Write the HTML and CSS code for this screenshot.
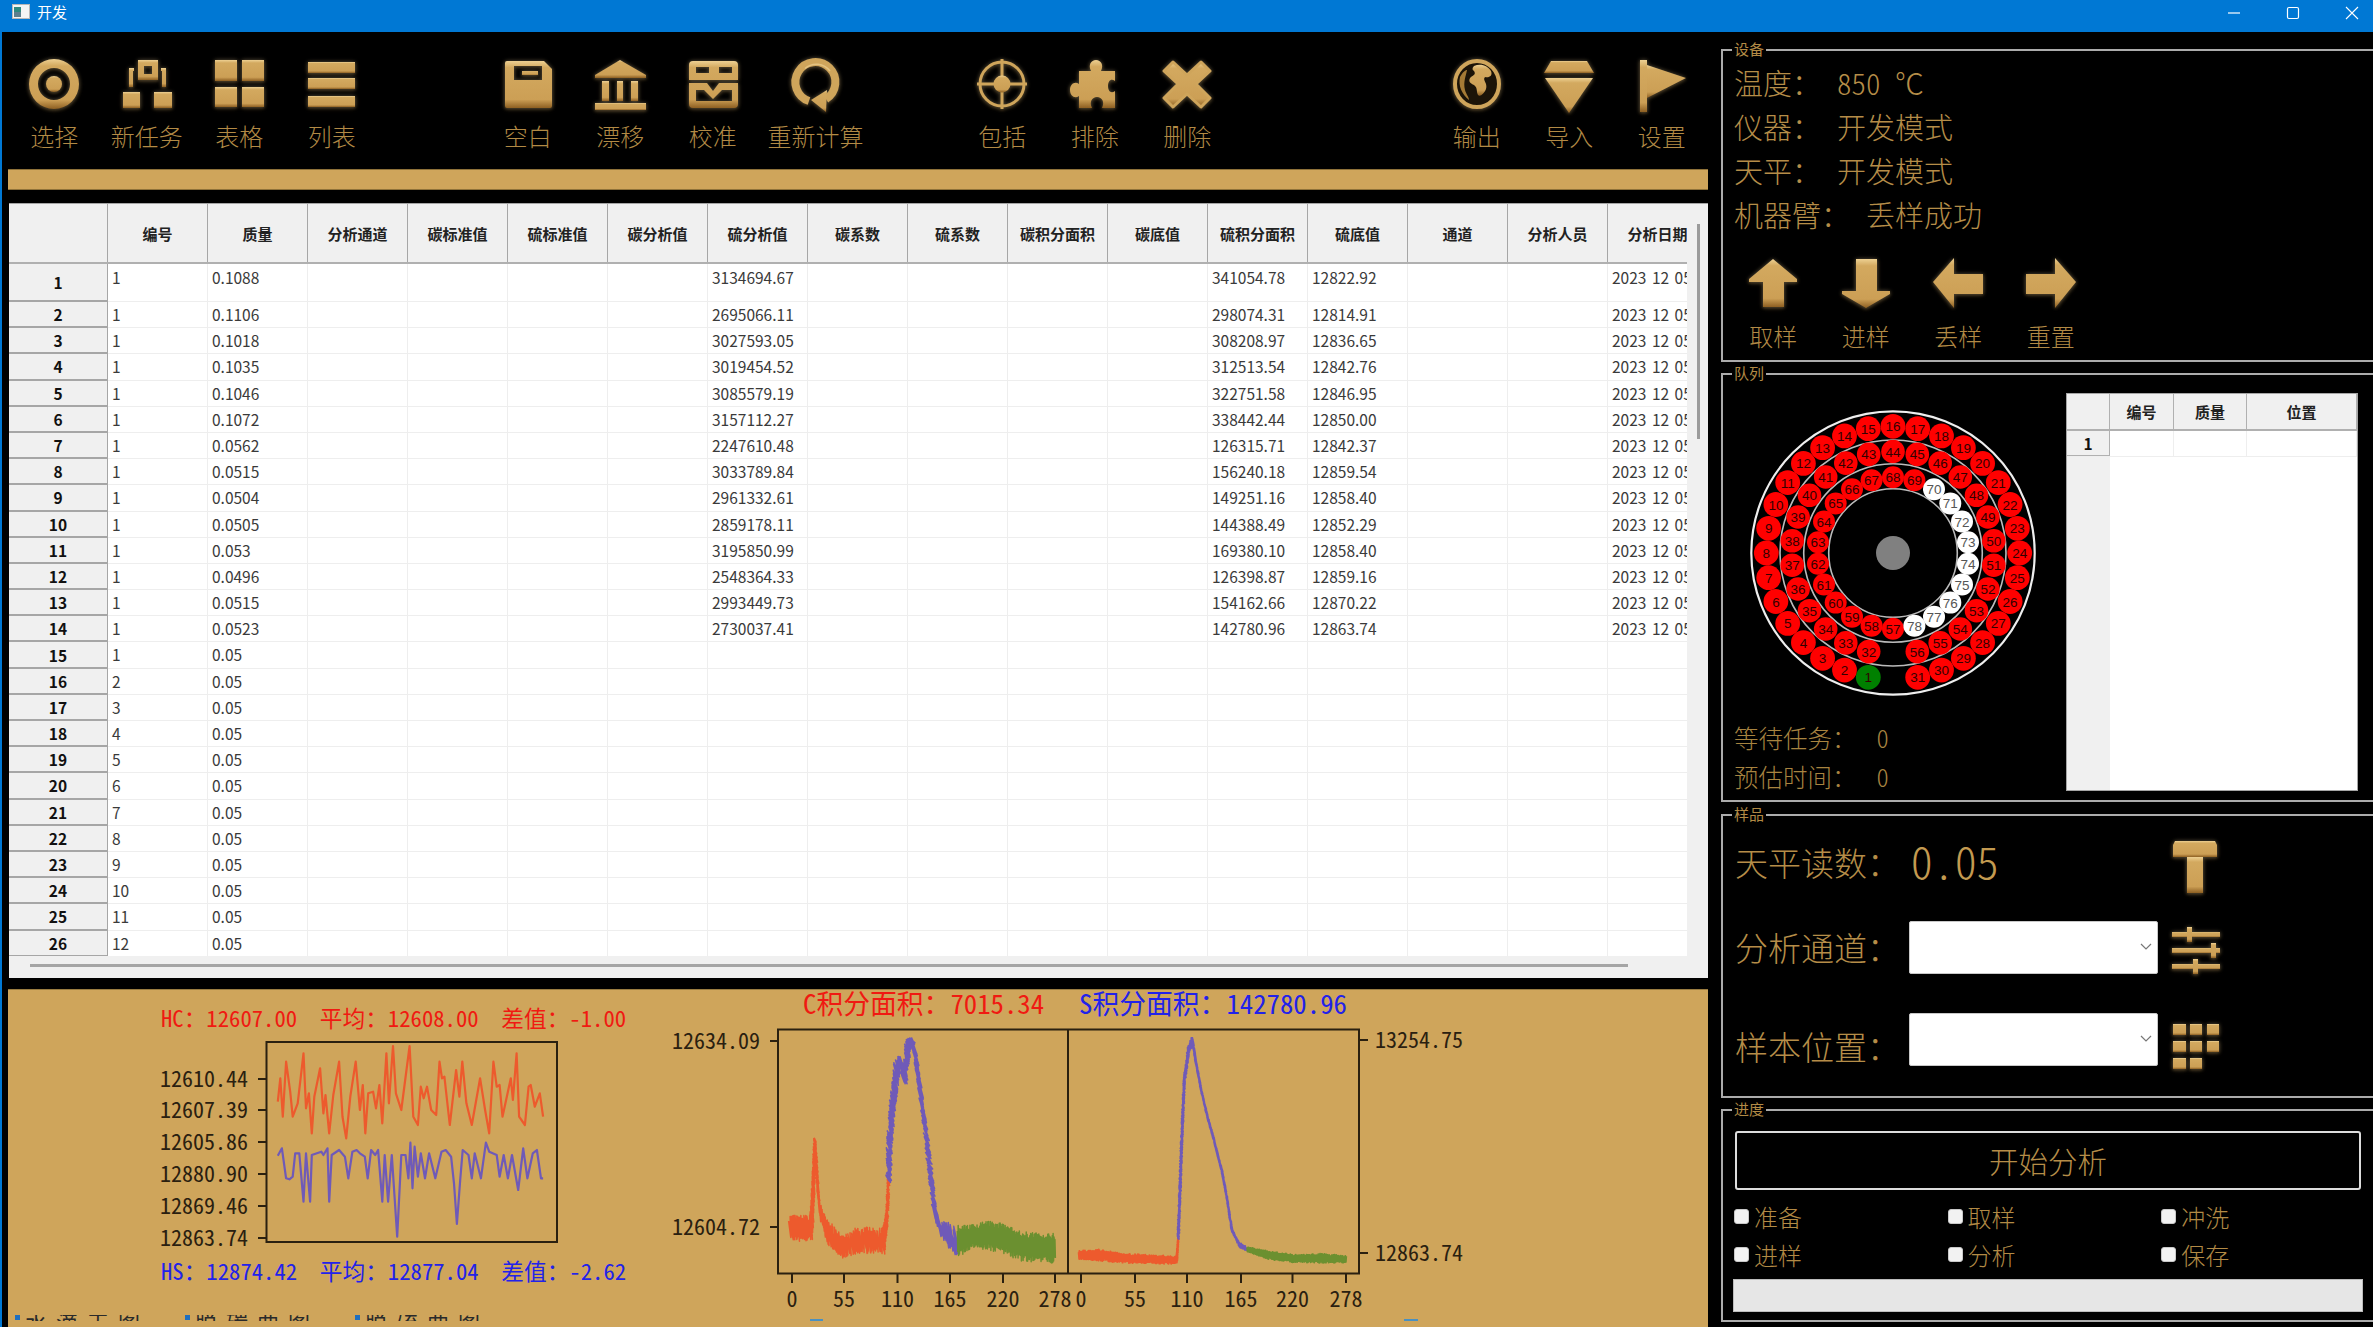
FILE: index.html
```html
<!DOCTYPE html>
<html lang="zh-CN">
<head>
<meta charset="utf-8">
<title>开发</title>
<link rel="stylesheet" href="styles.css">
</head>
<body>
<svg class="defs" width="0" height="0" aria-hidden="true">
  <defs>
    <linearGradient id="gold" x1="0" y1="0" x2="0" y2="1">
      <stop offset="0" stop-color="#edd092"/>
      <stop offset=".14" stop-color="#d3a95f"/>
      <stop offset=".82" stop-color="#cc9f55"/>
      <stop offset="1" stop-color="#8d5f22"/>
    </linearGradient>
  </defs>
</svg>

<header class="titlebar">
  <svg class="app-icon" width="18" height="15" viewBox="0 0 18 15"><rect x=".5" y=".5" width="17" height="14" fill="#f4f4f4" stroke="#b8b8b8"/><rect x="2" y="3" width="7" height="10" fill="#2f8a80"/><rect x="2" y="8" width="7" height="5" fill="#5d7f8e"/></svg>
  <span class="title-text">开发</span>
  <div class="window-controls">
    <span class="win-btn"><svg width="14" height="14" viewBox="0 0 14 14"><path d="M1 7h12" stroke="#fff" stroke-width="1.2"/></svg></span>
    <span class="win-btn"><svg width="14" height="14" viewBox="0 0 14 14"><rect x="1.5" y="1.5" width="11" height="11" rx="1.5" fill="none" stroke="#fff" stroke-width="1.2"/></svg></span>
    <span class="win-btn"><svg width="14" height="14" viewBox="0 0 14 14"><path d="M1 1l12 12M13 1L1 13" stroke="#fff" stroke-width="1.1"/></svg></span>
  </div>
</header>

<div class="main">
  <div class="left-col">
    <nav class="toolbar">
      <div class="tool-group">
        <div class="tool"><svg class="icon" viewBox="0 0 60 60" fill="url(#gold)"><path fill-rule="evenodd" d="M30 6a25 25 0 1 0 0 50a25 25 0 1 0 0-50zM30 15a16 16 0 1 1 0 32a16 16 0 1 1 0-32z"/><circle cx="30" cy="31" r="8"/></svg><span class="tool-label">选择</span></div>
        <div class="tool"><svg class="icon" viewBox="0 0 60 60" fill="url(#gold)"><path fill-rule="evenodd" d="M21 7h20v20H21zM27 13v8h8v-8z"/><path d="M12 15h5v3h-1v16h-4z"/><path d="M44 15h5v19h-4V18h-1z"/><rect x="6" y="39" width="17" height="16"/><rect x="37" y="39" width="18" height="16"/></svg><span class="tool-label">新任务</span></div>
        <div class="tool"><svg class="icon" viewBox="0 0 60 60" fill="url(#gold)"><rect x="6" y="7" width="22" height="21"/><rect x="33" y="7" width="22" height="21"/><rect x="6" y="34" width="22" height="20"/><rect x="33" y="34" width="22" height="20"/></svg><span class="tool-label">表格</span></div>
        <div class="tool"><svg class="icon" viewBox="0 0 60 60" fill="url(#gold)"><rect x="6" y="9" width="47" height="11"/><rect x="6" y="25" width="47" height="11"/><rect x="6" y="43" width="47" height="11"/></svg><span class="tool-label">列表</span></div>
      </div>
      <div class="tool-group group-2">
        <div class="tool"><svg class="icon" viewBox="0 0 60 60" fill="url(#gold)"><path fill-rule="evenodd" d="M9 8h37l8 8v37a2 2 0 0 1-2 2H9a2 2 0 0 1-2-2V10a2 2 0 0 1 2-2zM16 13v14h28V13z"/><rect x="24" y="18" width="16" height="4"/></svg><span class="tool-label">空白</span></div>
        <div class="tool"><svg class="icon" viewBox="0 0 60 60" fill="url(#gold)"><path d="M30 7l26 15v3H5v-3z"/><rect x="12" y="28" width="7" height="20"/><rect x="27" y="28" width="6" height="20"/><rect x="41" y="28" width="7" height="20"/><rect x="5" y="50" width="51" height="7"/></svg><span class="tool-label">漂移</span></div>
        <div class="tool"><svg class="icon" viewBox="0 0 60 60" fill="url(#gold)"><path fill-rule="evenodd" d="M10 8h41a4 4 0 0 1 4 4v39a4 4 0 0 1-4 4H10a4 4 0 0 1-4-4V12a4 4 0 0 1 4-4zM13 14v6h13v-6zM36 14v6h13v-6zM6 27v3h18l6 8 6-8h19v-3zM13 37v11h36V37H39l-9 9-9-9z"/></svg><span class="tool-label">校准</span></div>
        <div class="tool tool-wide"><svg class="icon" viewBox="0 0 60 60"><path d="M23 48A20 20 0 1 1 40 46" fill="none" stroke="#cfa55b" stroke-width="8"/><path d="M19 15.500A17 17 0 0 1 44 18" fill="none" stroke="#e4c382" stroke-width="1.500"/><path d="M41 37l-1 22-15-12z" fill="url(#gold)"/></svg><span class="tool-label">重新计算</span></div>
      </div>
      <div class="tool-group group-3">
        <div class="tool"><svg class="icon" viewBox="0 0 60 60"><circle cx="30" cy="31" r="22" fill="none" stroke="#cfa55b" stroke-width="3"/><path d="M30 6v50M5 31h50" stroke="#cfa55b" stroke-width="3"/><circle cx="30" cy="31" r="8.500" fill="url(#gold)"/></svg><span class="tool-label">包括</span></div>
        <div class="tool"><svg class="icon" viewBox="0 0 60 60" fill="url(#gold)"><path d="M21 18H26C23 12 26 7 31 7S39 12 36 18H50V28C46 25 43 28 43 33S46 41 50 38V55H37C40 49 37 44 32 44S24 49 27 55H14V43C10 46 5 43 5 37S10 28 14 31V18Z"/></svg><span class="tool-label">排除</span></div>
        <div class="tool"><svg class="icon" viewBox="0 0 60 60" fill="url(#gold)"><path stroke="#cfa55b" stroke-width="3" stroke-linejoin="round" d="M16 9l14 13L44 9l9 9-14 13 14 14-9 9-14-13-14 13-9-9 14-14L7 18z"/></svg><span class="tool-label">删除</span></div>
      </div>
      <div class="tool-group group-4">
        <div class="tool"><svg class="icon" viewBox="0 0 60 60"><ellipse cx="30" cy="31" rx="22" ry="23" fill="#1c1408" stroke="#cfa55b" stroke-width="4"/><path fill="url(#gold)" d="M27 13c7-3 14 0 17 5 2 5-2 7-6 6-3 3 3 6 1 12-2 5-6 8-8 6-2-4 0-7-4-10-5-2-6-5-3-8 3-2 5-3 3-6-2-1-2-3 0-5z"/><path fill="#a57a35" d="M13 24c3-5 5-7 7-7-1 6-4 12-2 20 1 4 4 7 4 10-7-6-11-14-9-23z"/></svg><span class="tool-label">输出</span></div>
        <div class="tool"><svg class="icon" viewBox="0 0 60 60" fill="url(#gold)"><path d="M12 8h36l7 12H5z"/><path d="M6 25h48L30 60z"/></svg><span class="tool-label">导入</span></div>
        <div class="tool"><svg class="icon" viewBox="0 0 60 60" fill="url(#gold)"><rect x="8" y="7" width="7" height="52"/><path d="M15 12l39 13-39 20z"/></svg><span class="tool-label">设置</span></div>
      </div>
    </nav>
    <div class="gold-bar"></div>

    <section class="table-frame">
      <div class="table-view">
        <div class="t-row t-head">
          <div class="t-corner"></div>
          <div class="t-hcell">编号</div><div class="t-hcell">质量</div><div class="t-hcell">分析通道</div><div class="t-hcell">碳标准值</div><div class="t-hcell">硫标准值</div><div class="t-hcell">碳分析值</div><div class="t-hcell">硫分析值</div><div class="t-hcell">碳系数</div><div class="t-hcell">硫系数</div><div class="t-hcell">碳积分面积</div><div class="t-hcell">碳底值</div><div class="t-hcell">硫积分面积</div><div class="t-hcell">硫底值</div><div class="t-hcell">通道</div><div class="t-hcell">分析人员</div><div class="t-hcell">分析日期</div>
        </div>
        <div id="table-body"></div>
      </div>
      <div class="v-scroll"><div class="v-thumb"></div></div>
      <div class="h-scroll"><div class="h-thumb"></div></div>
    </section>

    <section class="chart-panel">
      <svg id="charts" class="charts" viewBox="8 989 1700 338" width="1700" height="338"></svg>
    </section>
  </div>

  <aside class="right-col">
    <section class="box box-device">
      <span class="legend">设备</span>
      <div class="dev-row"><span>温度：</span><span>850 ℃</span></div>
      <div class="dev-row"><span>仪器：</span><span>开发模式</span></div>
      <div class="dev-row"><span>天平：</span><span>开发模式</span></div>
      <div class="dev-row"><span>机器臂：</span><span>丢样成功</span></div>
      <div class="arrow-row">
        <div class="tool"><svg class="icon" viewBox="0 0 60 60" fill="url(#gold)"><path d="M30 7l24 20v3H41v25H20V30H6v-3z"/></svg><span class="tool-label">取样</span></div>
        <div class="tool"><svg class="icon" viewBox="0 0 60 60" fill="url(#gold)"><path d="M20 7h21v32h13v3L30 56 6 42v-3h14z"/></svg><span class="tool-label">进样</span></div>
        <div class="tool"><svg class="icon" viewBox="0 0 60 60" fill="url(#gold)"><path d="M5 30L26 6v16h29v20H26v14z"/></svg><span class="tool-label">丢样</span></div>
        <div class="tool"><svg class="icon" viewBox="0 0 60 60" fill="url(#gold)"><path d="M55 30L34 6v16H5v20h29v14z"/></svg><span class="tool-label">重置</span></div>
      </div>
    </section>

    <section class="box box-queue">
      <span class="legend">队列</span>
      <div class="queue-left">
        <svg id="wheel" class="wheel" viewBox="0 0 300 300" width="300" height="300"></svg>
        <div class="queue-status"><span>等待任务：</span><span>0</span></div>
        <div class="queue-status"><span>预估时间：</span><span>0</span></div>
      </div>
      <div class="queue-table">
        <div class="q-row q-head"><div class="q-corner"></div><div class="q-hcell q-c1">编号</div><div class="q-hcell q-c2">质量</div><div class="q-hcell q-c3">位置</div></div>
        <div class="q-row q-body"><div class="q-rowhead">1</div><div class="q-cell q-c1"></div><div class="q-cell q-c2"></div><div class="q-cell q-c3"></div></div>
      </div>
    </section>

    <section class="box box-sample">
      <span class="legend">样品</span>
      <div class="sample-row">
        <span class="sample-label label-high">天平读数：</span>
        <span class="balance">0.05</span>
        <svg class="icon" viewBox="0 0 60 60" fill="url(#gold)"><path d="M10 7h40l2 4v12H8V11z"/><rect x="22" y="23" width="16" height="36"/></svg>
      </div>
      <div class="sample-row row-channel">
        <span class="sample-label">分析通道：</span>
        <div class="combo"><svg width="12" height="8" viewBox="0 0 12 8"><path d="M1 1l5 5 5-5" fill="none" stroke="#777" stroke-width="1.200"/></svg></div>
        <svg class="icon" viewBox="0 0 60 60" fill="url(#gold)"><rect x="7" y="14" width="48" height="5"/><rect x="22" y="9" width="5" height="15"/><rect x="7" y="30" width="48" height="5"/><rect x="46" y="25" width="5" height="15"/><rect x="7" y="46" width="48" height="5"/><rect x="28" y="41" width="5" height="15"/></svg>
      </div>
      <div class="sample-row row-position">
        <span class="sample-label label-low">样本位置：</span>
        <div class="combo"><svg width="12" height="8" viewBox="0 0 12 8"><path d="M1 1l5 5 5-5" fill="none" stroke="#777" stroke-width="1.200"/></svg></div>
        <svg class="icon" viewBox="0 0 60 60" fill="url(#gold)"><rect x="8" y="14" width="13" height="11"/><rect x="25" y="14" width="12" height="11"/><rect x="42" y="14" width="12" height="11"/><rect x="8" y="31" width="13" height="11"/><rect x="25" y="31" width="12" height="11"/><rect x="42" y="31" width="12" height="11"/><rect x="8" y="48" width="13" height="11"/><rect x="25" y="48" width="12" height="11"/></svg>
      </div>
    </section>

    <section class="box box-progress">
      <span class="legend">进度</span>
      <button class="start-btn" type="button">开始分析</button>
      <div class="checks">
        <label class="check"><input type="checkbox">准备</label>
        <label class="check"><input type="checkbox">取样</label>
        <label class="check"><input type="checkbox">冲洗</label>
        <label class="check"><input type="checkbox">进样</label>
        <label class="check"><input type="checkbox">分析</label>
        <label class="check"><input type="checkbox">保存</label>
      </div>
      <div class="progress-bar"></div>
    </section>
  </aside>
</div>
<script src="app.js"></script>
</body>
</html>
```
FILE: styles.css
```css
* { box-sizing: border-box; }
html, body { margin: 0; padding: 0; }
body {
  width: 2373px;
  height: 1327px;
  overflow: hidden;
  background: #000;
  font-family: "Noto Sans CJK SC", "Liberation Sans", sans-serif;
  display: flex;
  flex-direction: column;
}
.defs { position: absolute; }

.titlebar {
  height: 32px;
  flex: none;
  background: #0078d4;
  display: flex;
  align-items: center;
  padding-left: 12px;
  color: #fff;
  font-size: 15px;
}
.app-icon { margin-top: -9px; }
.title-text { margin-left: 7px; margin-top: -9px; line-height: 1; }
.window-controls { margin-left: auto; margin-right: -8px; display: flex; margin-top: -6px; }
.win-btn { width: 59px; display: flex; justify-content: center; }

.main { flex: 1; display: flex; border-left: 2px solid #0078d4; min-height: 0; }
.left-col { width: 1706px; padding-left: 6px; display: flex; flex-direction: column; }
.right-col { flex: 1; margin-left: 13px; padding-top: 17px; display: flex; flex-direction: column; overflow: hidden; }

/* old-style half-width text */
.tool-label, .dev-row, .queue-status, .sample-label, .balance, .start-btn, .check, .chart-text {
  font-family: "Noto Sans CJK SC", sans-serif;
  font-feature-settings: "hwid";
  font-weight: 300;
}

.toolbar { height: 137px; padding-top: 21px; display: flex; flex: none; }
.tool-group { display: flex; }
.group-2 { margin-left: 103.5px; }
.group-3 { margin-left: 84px; }
.group-4 { margin-left: 197px; }
.tool { width: 92.500px; display: flex; flex-direction: column; align-items: center; }
.tool-wide { width: 113px; }
.icon {
  width: 60px;
  height: 60px;
  flex: none;
  overflow: visible;
  filter: drop-shadow(0 0 2px rgba(70, 68, 60, .9)) drop-shadow(0 1px 1px rgba(100, 72, 28, .7));
}
.tool-label { margin-top: 8px; line-height: 30px; font-size: 24px; color: #b28a45; white-space: nowrap; }

.gold-bar { height: 21px; flex: none; background: #cfa55b; border: 1px solid #8f7239; border-width: 1px 0; }

.table-frame {
  margin: 13px 0 0 1px;
  height: 774px;
  flex: none;
  background: #f0f0f0;
  display: grid;
  grid-template-columns: 1678px 21px;
  grid-template-rows: 752px 22px;
  border-top: 1px solid #a5a5a5;
}
.table-view { background: #fff; overflow: hidden; }
.t-row { display: flex; }
.t-head { height: 60px; border-bottom: 2px solid #b0b0b0; }
.t-corner { width: 99px; flex: none; background: #f0f0f0; border-right: 1px solid #a6a6a6; }
.t-hcell {
  width: 100px;
  flex: none;
  background: #f0f0f0;
  border-right: 1px solid #a6a6a6;
  display: flex;
  align-items: center;
  justify-content: center;
  font-size: 15px;
  font-weight: 700;
  color: #222;
  white-space: nowrap;
  overflow: hidden;
}
.t-data { height: 26.200px; }
.t-tall { height: 38px; }
.t-rowhead {
  width: 99px;
  flex: none;
  background: #f0f0f0;
  border-right: 1px solid #a6a6a6;
  border-bottom: 2px solid #a6a6a6;
  display: flex;
  align-items: center;
  justify-content: center;
  font-size: 15.500px;
  font-weight: 700;
  color: #111;
}
.t-cell {
  width: 100px;
  flex: none;
  padding-left: 4px;
  border-right: 1px solid #eeeeee;
  border-bottom: 1px solid #eeeeee;
  font-size: 15.500px;
  line-height: 25px;
  color: #3a3a3a;
  white-space: nowrap;
  word-spacing: 2px;
  overflow: hidden;
}
.t-tall .t-cell { line-height: 24px; padding-top: 1px; }
.v-scroll { background: #f0f0f0; grid-row: 1 / span 2; grid-column: 2; padding-top: 20px; padding-left: 10px; }
.v-thumb { width: 3px; height: 215px; background: #9b9b9b; }
.h-scroll { padding: 8px 0 0 21px; background: #f0f0f0; }
.h-thumb { width: 1598px; height: 3px; background: #a5a5a5; }

.chart-panel { margin-top: 12px; flex: 1; background: #cfa55b; border-top: 1px solid #9a7c40; min-height: 0; overflow: hidden; }
.charts { display: block; margin-top: -1px; }
.chart-text { font-size: 22px; font-weight: 400; fill: #2a2010; dominant-baseline: central; }
.chart-head { font-size: 22.700px; white-space: pre; }
.chart-title { font-size: 26.800px; }
.red { fill: #f01a12; }
.blue { fill: #2222ea; }
.clip-text { font-size: 22px; fill: #2a2a2a; letter-spacing: 9px; font-family: "Noto Sans CJK SC", sans-serif; }

.box { position: relative; border: 2px solid #ababab; border-right: 0; flex: none; }
.legend {
  position: absolute;
  left: 9px;
  top: -11px;
  padding: 0 2px;
  background: #000;
  color: #b28a45;
  font-size: 15px;
  line-height: 18px;
}
.box-device { height: 313px; padding: 8.500px 0 0 11px; }
.box-queue { height: 429px; margin-top: 11px; padding: 18px 0 0 11px; display: flex; }
.box-sample { height: 284px; margin-top: 12px; padding-top: 20px; }
.box-progress { height: 213px; margin-top: 11px; padding: 19.500px 0 0 12px; }

.dev-row { height: 44px; line-height: 44px; font-size: 29px; color: #b58d48; display: flex; gap: 16px; white-space: pre; }
.arrow-row { display: flex; margin: 16px 0 0 -7px; }
.arrow-row .tool-label { margin-top: 9.500px; }

.queue-left { width: 332px; flex: none; }
.wheel { display: block; margin: 10px 0 0 9px; }
.queue-status { height: 39px; line-height: 39px; font-size: 24.500px; color: #a88440; display: flex; gap: 20px; }
.wheel + .queue-status { margin-top: 14.500px; }
.queue-table { width: 292px; height: 398px; flex: none; border: 1px solid #a5a5a5; background: linear-gradient(to right, #f0f0f0 43px, #fff 43px); }
.q-row { display: flex; }
.q-head { height: 37px; border-bottom: 2px solid #b0b0b0; background: #f0f0f0; }
.q-corner, .q-rowhead { width: 43px; flex: none; border-right: 1px solid #b0b0b0; }
.q-body { height: 26px; border-bottom: 1px solid #eeeeee; }
.q-rowhead { display: flex; align-items: center; justify-content: center; background: #f0f0f0; font-size: 15.500px; font-weight: 700; color: #111; border-bottom: 1px solid #b0b0b0; }
.q-hcell { display: flex; align-items: center; justify-content: center; font-size: 15px; font-weight: 700; color: #222; border-right: 1px solid #b0b0b0; }
.q-cell { border-right: 1px solid #eeeeee; }
.q-c1 { width: 64px; }
.q-c2 { width: 73px; }
.q-c3 { width: 110px; }

.sample-row { display: flex; align-items: center; height: 53px; padding-left: 12px; }
.row-channel { margin-top: 31.500px; }
.row-position { margin-top: 39px; }
.sample-label { width: 173.700px; flex: none; font-size: 33px; color: #b58d48; white-space: nowrap; }
.label-high { margin-bottom: 2px; }
.label-low { margin-top: 13px; }
.balance { width: 249.300px; flex: none; padding-left: 2px; margin-bottom: 5px; font-size: 44px; color: #c39a50; }
.combo { width: 249.300px; height: 53px; flex: none; background: #fff; border: 1px solid #c8c8c8; border-radius: 2px; display: flex; align-items: center; justify-content: flex-end; padding-right: 5px; }
.sample-row .icon { margin: 2px 0 0 7px; }

.start-btn {
  display: block;
  width: 626px;
  height: 59px;
  background: #000;
  border: 2px solid #dcdcdc;
  border-radius: 3px;
  color: #b58d48;
  font-size: 29.500px;
  padding: 0;
}
.checks { margin: 8px 0 0 -1px; display: grid; grid-template-columns: repeat(3, 213.600px); grid-auto-rows: 38px; }
.check { display: flex; align-items: center; gap: 5px; font-size: 24px; color: #b28a45; }
.check input { appearance: none; margin: 0; width: 15px; height: 15px; border-radius: 3px; background: #f2f2f2; border: 1px solid #c8c8c8; flex: none; }
.progress-bar { margin: 5px 0 0 -2px; width: 630px; height: 33px; background: #e6e6e6; border: 1px solid #bcbcbc; }
```
FILE: app.js
```js
/* ---------- main table ---------- */
var rows = [
  ["1","0.1088","3134694.67","341054.78","12822.92"],
  ["1","0.1106","2695066.11","298074.31","12814.91"],
  ["1","0.1018","3027593.05","308208.97","12836.65"],
  ["1","0.1035","3019454.52","312513.54","12842.76"],
  ["1","0.1046","3085579.19","322751.58","12846.95"],
  ["1","0.1072","3157112.27","338442.44","12850.00"],
  ["1","0.0562","2247610.48","126315.71","12842.37"],
  ["1","0.0515","3033789.84","156240.18","12859.54"],
  ["1","0.0504","2961332.61","149251.16","12858.40"],
  ["1","0.0505","2859178.11","144388.49","12852.29"],
  ["1","0.053","3195850.99","169380.10","12858.40"],
  ["1","0.0496","2548364.33","126398.87","12859.16"],
  ["1","0.0515","2993449.73","154162.66","12870.22"],
  ["1","0.0523","2730037.41","142780.96","12863.74"]
];
for (var n = 1; n <= 12; n++) rows.push([String(n), "0.05", "", "", ""]);

var html = "";
rows.forEach(function (r, i) {
  var cells = new Array(16).fill("");
  cells[0] = r[0]; cells[1] = r[1]; cells[6] = r[2]; cells[11] = r[3]; cells[12] = r[4];
  if (r[2]) cells[15] = "2023 12 05";
  html += '<div class="t-row ' + (i === 0 ? "t-tall" : "t-data") + '"><div class="t-rowhead">' + (i + 1) + "</div>";
  cells.forEach(function (c) { html += '<div class="t-cell">' + c + "</div>"; });
  html += "</div>";
});
document.getElementById("table-body").innerHTML = html;

/* ---------- sample wheel ---------- */
function ring(from, count, steps, r, br, s) {
  var out = "";
  for (var k = 0; k < count; k++) {
    var num = from + k;
    var a = ((k + s) * 2 * Math.PI) / steps;
    var x = 150 - r * Math.sin(a), y = 150 + r * Math.cos(a);
    var fill = num === 1 ? "#008000" : num >= 70 ? "#fff" : "#f00";
    var tc = num >= 70 ? "#555" : "#300";
    out += '<circle cx="' + x.toFixed(1) + '" cy="' + y.toFixed(1) + '" r="' + br + '" fill="' + fill + '"/>' +
      '<text x="' + x.toFixed(1) + '" y="' + (y + 5).toFixed(1) + '" text-anchor="middle" font-family="Liberation Sans" font-size="13.5" fill="' + tc + '">' + num + "</text>";
  }
  return out;
}
document.getElementById("wheel").innerHTML =
  '<g fill="none"><circle cx="150" cy="150" r="141.7" stroke="#eee" stroke-width="2.2"/>' +
  '<circle cx="150" cy="150" r="113" stroke="#bbb" stroke-width="1.6"/>' +
  '<circle cx="150" cy="150" r="89.3" stroke="#bbb" stroke-width="1.6"/>' +
  '<circle cx="150" cy="150" r="64.3" stroke="#bbb" stroke-width="1.6"/></g>' +
  '<circle cx="150" cy="150" r="17" fill="#808080"/>' +
  ring(1, 31, 32, 126.7, 12.4, 1) + ring(32, 25, 26, 101.5, 11.8, 1) + ring(57, 22, 22, 75.8, 11, 0);

/* ---------- charts ---------- */
var seed = 7;
function rnd() { seed = (seed * 16807) % 2147483647; return seed / 2147483647; }
function zx6(x) { return x / 2.412; }
function zx7(x) { return 640 + x / 1.96; }
function zy(y) { return 970 + y / 3; }

function line(flat, color, w) {
  var p = [];
  for (var i = 0; i < flat.length; i += 2) p.push(zx6(flat[i]).toFixed(1) + "," + zy(flat[i + 1]).toFixed(1));
  return '<polyline fill="none" stroke="' + color + '" stroke-width="' + w + '" stroke-linejoin="round" points="' + p.join(" ") + '"/>';
}
/* noisy signal: each point [x, y, vertical half-width], jx = sideways spread on steep parts */
function band(pts, color, jx, sw) {
  var p = [], up = true;
  for (var i = 0; i < pts.length - 1; i++) {
    var a = pts[i], b = pts[i + 1];
    var x0 = zx7(a[0]), x1 = zx7(b[0]);
    var y0 = zy(a[1]), y1 = zy(b[1]);
    var len = Math.hypot(x1 - x0, y1 - y0);
    var steps = Math.max(2, Math.round(len / 0.45));
    for (var s = 0; s < steps; s++) {
      var t = s / steps;
      var h = (a[2] + (b[2] - a[2]) * t) / 3;
      var sign = up ? -1 : 1;
      var py = y0 + (y1 - y0) * t + h * (0.55 + 0.45 * rnd()) * sign;
      var px = x0 + (x1 - x0) * t + jx * rnd() * sign;
      p.push(px.toFixed(2) + "," + py.toFixed(1));
      up = !up;
    }
  }
  return '<polyline fill="none" stroke="' + color + '" stroke-width="' + sw + '" stroke-linejoin="round" points="' + p.join(" ") + '"/>';
}
function label(x, y, s, anchor, cls) {
  return '<text class="chart-text ' + (cls || "") + '" x="' + x + '" y="' + (y - 2) + '"' + (anchor ? ' text-anchor="' + anchor + '"' : "") + ">" + s + "</text>";
}
function tick(x1, y1, x2, y2) {
  return '<line x1="' + x1 + '" y1="' + y1 + '" x2="' + x2 + '" y2="' + y2 + '" stroke="#2a2010" stroke-width="2"/>';
}

var ORANGE = "#ed5a2d", PURPLE = "#6f5ab8", GREEN = "#6b9030";
var svg = "";

/* small drift chart */
svg += label(161, 1019, "HC：12607.00  平均：12608.00  差值：-1.00", "", "chart-head red");
svg += '<rect x="266.500" y="1042" width="290.500" height="200" fill="none" stroke="#2a2010" stroke-width="2"/>';
[[1079,"12610.44"],[1110,"12607.39"],[1142,"12605.86"],[1174,"12880.90"],[1206,"12869.46"],[1238,"12863.74"]].forEach(function (t) {
  svg += tick(258, t[0], 266, t[0]) + label(248, t[0], t[1], "end");
});
svg += line([670,395,676,325,682,440,690,275,700,365,706,440,718,400,732,250,738,415,745,370,752,490,758,380,772,295,780,430,785,375,794,490,804,375,818,275,826,440,835,505,845,380,858,275,868,420,875,345,881,490,888,370,900,365,907,415,915,345,922,460,932,250,938,400,948,228,955,370,968,420,988,228,997,440,1008,465,1015,350,1022,385,1030,350,1040,420,1052,435,1060,275,1066,325,1072,320,1085,465,1100,300,1108,380,1115,275,1125,400,1138,465,1158,325,1170,420,1180,490,1190,275,1198,350,1205,345,1212,440,1232,325,1237,390,1246,250,1252,440,1266,465,1275,350,1280,345,1290,410,1302,370,1310,440], ORANGE, 2.2);
svg += line([670,557,680,535,690,625,698,628,706,620,712,550,722,550,732,695,738,550,748,695,752,555,775,545,780,555,790,535,794,695,800,555,818,540,832,560,840,625,850,545,860,540,868,550,880,560,887,625,895,540,905,555,912,540,922,695,928,555,936,695,945,555,958,800,968,555,978,555,985,625,990,518,995,655,1000,530,1008,620,1015,550,1025,625,1035,550,1050,625,1065,545,1075,540,1088,560,1095,640,1102,762,1110,630,1116,540,1130,555,1138,625,1145,550,1160,625,1172,518,1180,545,1198,555,1205,620,1215,555,1225,625,1235,555,1250,660,1262,535,1272,625,1285,550,1295,540,1305,625,1310,625], PURPLE, 2.2);
svg += label(161, 1272, "HS：12874.42  平均：12877.04  差值：-2.62", "", "chart-head blue");

/* peak chart */
svg += label(803, 1004, "C积分面积：7015.34", "", "chart-title red");
svg += label(1079, 1004, "S积分面积：142780.96", "", "chart-title blue");
svg += '<rect x="778" y="1029.500" width="581" height="244" fill="none" stroke="#2a2010" stroke-width="2"/>';
svg += tick(1068, 1029, 1068, 1274);
svg += tick(770, 1041, 778, 1041) + label(760, 1041, "12634.09", "end");
svg += tick(770, 1227, 778, 1227) + label(760, 1227, "12604.72", "end");
svg += tick(1359, 1040, 1368, 1040) + label(1375, 1040, "13254.75");
svg += tick(1359, 1253, 1368, 1253) + label(1375, 1253, "12863.74");
[[792,"0"],[844,"55"],[897.5,"110"],[950,"165"],[1003,"220"],[1055,"278"],[1081,"0"],[1135,"55"],[1187,"110"],[1241,"165"],[1292.500,"220"],[1346,"278"]].forEach(function (t) {
  svg += tick(t[0], 1274, t[0], 1283) + label(t[0], 1299, t[1], "middle");
});
svg += band([[294,775,40],[335,775,40],[338,720,30],[343,510,8],[348,640,15],[352,720,25],[365,780,40],[395,830,35],[430,810,40],[478,815,40],[484,740,10],[487,630,5]], ORANGE, 1.5, 1.5);
svg += band([[487,630,10],[489,520,15],[495,400,20],[503,300,25],[510,270,15],[518,330,15],[525,230,25],[533,210,10],[540,260,25],[550,370,25],[560,480,12],[570,620,10],[578,730,20],[590,780,25],[605,800,45],[622,815,50]], PURPLE, 3, 1.5);
svg += band([[622,815,50],[650,800,35],[680,795,45],[710,805,45],[750,830,45],[815,835,45]], GREEN, 0, 1.5);
svg += band([[860,855,14],[900,855,17],[950,865,14],[1052,870,12],[1055,805,3]], ORANGE, 0.5, 2);
svg += band([[1055,805,4],[1062,500,4],[1067,330,4],[1075,240,8],[1083,210,10],[1090,280,8],[1100,360,8],[1112,440,8],[1125,510,8],[1140,600,8],[1150,680,6],[1160,780,8],[1175,825,8],[1190,838,6]], PURPLE, 1, 2);
svg += band([[1190,838,7],[1230,855,12],[1280,865,12],[1340,865,14],[1385,868,10]], GREEN, 0, 2);

/* tab strip, cut off by the window edge */
svg += '<defs><clipPath id="tab-clip"><rect x="8" y="1315" width="1700" height="6"/></clipPath></defs>';
svg += '<g clip-path="url(#tab-clip)">' +
  '<text class="clip-text" x="25" y="1331">水滴天图</text>' +
  '<text class="clip-text" x="195" y="1331">脱碳曲图</text>' +
  '<text class="clip-text" x="365" y="1331">脱硫曲图</text></g>';
[15, 185, 355].forEach(function (x) { svg += '<rect x="' + x + '" y="1315" width="5" height="5" fill="#1f6fc0"/>'; });
svg += '<rect x="810" y="1319" width="13" height="2" fill="#4a90c0"/><rect x="1404" y="1319" width="14" height="2" fill="#4a90c0"/>';

document.getElementById("charts").innerHTML = svg;
```
